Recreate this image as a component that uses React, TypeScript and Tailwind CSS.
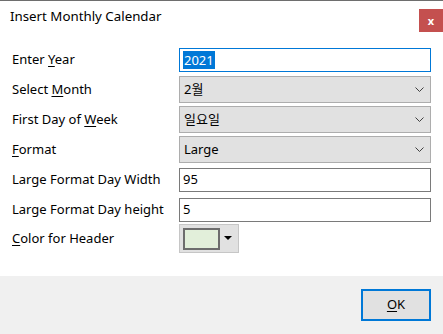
const font = { fontFamily: '"Noto Sans", "Noto Sans CJK KR", sans-serif' }

const Label = ({ pre, u, post }: { pre?: string; u?: string; post?: string }) => (
  <div className="w-[167px] shrink-0 text-[13px] text-black">
    {pre}
    {u && <span className="underline underline-offset-2">{u}</span>}
    {post}
  </div>
)

const Select = ({ value }: { value: string }) => (
  <div className="w-[252px] h-[27px] bg-[#e1e1e1] border border-[#adadad] flex items-center justify-between pl-[4px] pr-[6px] text-[13px]">
    <span>{value}</span>
    <svg width="9" height="5" viewBox="0 0 9 5">
      <path d="M0.5 0.5 L4.5 4.5 L8.5 0.5" fill="none" stroke="#404040" strokeWidth="1" />
    </svg>
  </div>
)

const Input = ({ value, focus }: { value: string; focus?: boolean }) => (
  <div
    className={
      "w-[252px] h-[24px] bg-white border flex items-center pl-[3px] text-[13px] " +
      (focus ? "border-[#0078d7]" : "border-[#7a7a7a]")
    }
  >
    {focus ? (
      <span className="bg-[#0078d7] text-white px-[1px] leading-[18px]">{value}</span>
    ) : (
      <span>{value}</span>
    )}
  </div>
)

const App = () => {
  return (
    <div className="w-[443px] h-[334px] bg-white flex flex-col border-t border-[#6e6e6e]" style={font}>
      <div className="h-[39px] flex items-start justify-between">
        <div className="pl-[10px] pt-[6px] text-[13.3px] text-black">Insert Monthly Calendar</div>
        <div className="mt-[8px] w-[24px] h-[23px] bg-[#c4504f] text-white text-[11px] font-bold flex items-center justify-center leading-none">
          x
        </div>
      </div>

      <div className="flex-1 pl-[12px] pt-[8px]">
        <div className="flex items-center h-[24px]">
          <Label pre="Enter " u="Y" post="ear" />
          <Input value="2021" focus />
        </div>
        <div className="flex items-center mt-[4px]">
          <Label pre="Select " u="M" post="onth" />
          <Select value="2월" />
        </div>
        <div className="flex items-center mt-[3px]">
          <Label pre="First Day of " u="W" post="eek" />
          <Select value="일요일" />
        </div>
        <div className="flex items-center mt-[3px]">
          <Label u="F" post="ormat" />
          <Select value="Large" />
        </div>
        <div className="flex items-center mt-[5px]">
          <Label pre="Large Format Day Width" />
          <Input value="95" />
        </div>
        <div className="flex items-center mt-[6px]">
          <Label pre="Large Format Day height" />
          <Input value="5" />
        </div>
        <div className="flex items-center mt-[2px]">
          <Label u="C" post="olor for Header" />
          <div className="w-[60px] h-[29px] bg-[#e1e1e1] border border-[#c6c6c6] flex items-center pl-[3px] gap-[4px]">
            <div className="w-[37px] h-[22px] bg-[#e2efda] border-2 border-[#6d6d6d]" />
            <svg width="8" height="5" viewBox="0 0 8 5">
              <path d="M0 0 L8 0 L4 4 Z" fill="#000" />
            </svg>
          </div>
        </div>
      </div>

      <div className="h-[58px] bg-[#f0f0f0] flex items-start justify-end pr-[12px] pt-[13px]">
        <div className="w-[70px] h-[32px] bg-[#e1e1e1] border-2 border-[#0078d7] flex items-center justify-center text-[13px]">
          <span>
            <span className="underline underline-offset-2">O</span>K
          </span>
        </div>
      </div>
    </div>
  )
}

export default App
